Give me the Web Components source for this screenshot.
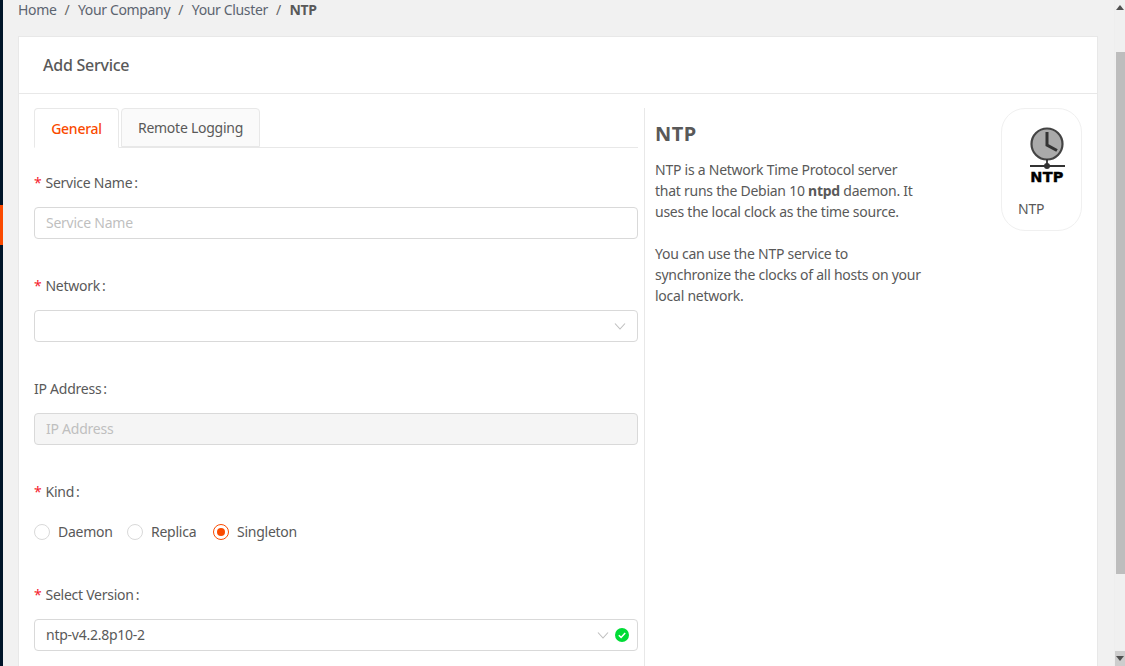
<!DOCTYPE html>
<html lang="en">
<head>
<meta charset="UTF-8">
<title>Add Service</title>
<style>
  html, body { margin: 0; height: 100%; overflow: hidden; }
  body { font: 14px/21px "Noto Sans", sans-serif; letter-spacing: -0.25px; color: #595959; background: #f1f1f1; }
</style>
</head>
<body>
<app-shell>
  <crumb-bar slot="crumbs"></crumb-bar>
  <service-card>
    <form-pane slot="form">
      <tab-strip></tab-strip>
      <form-field label="Service Name" required><text-input placeholder="Service Name"></text-input></form-field>
      <form-field label="Network" required><select-box></select-box></form-field>
      <form-field label="IP Address"><text-input placeholder="IP Address" disabled></text-input></form-field>
      <form-field label="Kind" required><radio-group options="Daemon,Replica,Singleton" selected="Singleton"></radio-group></form-field>
      <form-field label="Select Version" required><select-box value="ntp-v4.2.8p10-2" valid></select-box></form-field>
    </form-pane>
    <service-info slot="info"></service-info>
  </service-card>
</app-shell>

<script>
  // small helper, every element sets its shadow markup the same way
  class Base extends HTMLElement {
    constructor() {
      super();
      this.attachShadow({ mode: 'open' });
    }
    render(html) {
      this.shadowRoot.innerHTML = html;
    }
  }

  class AppShell extends Base {
    connectedCallback() {
      this.render(`
        <style>
          :host { display: flex; height: 666px; overflow: hidden; }
          .rail { width: 3px; flex: none; background: #001529; padding-top: 205px; box-sizing: border-box; }
          .rail i { display: block; height: 40px; background: #fa4a00; }
          main { flex: 1; min-width: 0; padding: 0 16px 0 15px; }
          .bar { width: 10px; flex: none; display: flex; flex-direction: column; background: #f0f0f0; border-left: 1px solid #eeeeee; }
          .arrow { height: 15px; flex: none; display: flex; align-items: center; justify-content: center; }
          .arrow.down { background: #cdcdcd; }
          .up-gap { height: 37px; flex: none; }
          .thumb { height: 522px; flex: none; margin-left: 1px; background: #bdbdbd; }
          .rest { flex: 1; }
        </style>
        <div class="rail"><i></i></div>
        <main><slot name="crumbs"></slot><slot></slot></main>
        <div class="bar">
          <div class="arrow"><svg width="8" height="5" viewBox="0 0 8 5"><path d="M4 0 8 5H0z" fill="#505050"/></svg></div>
          <div class="up-gap"></div>
          <div class="thumb"></div>
          <div class="rest"></div>
          <div class="arrow down"><svg width="8" height="5" viewBox="0 0 8 5"><path d="M0 0H8L4 5z" fill="#505050"/></svg></div>
        </div>
      `);
    }
  }

  class CrumbBar extends Base {
    connectedCallback() {
      this.render(`
        <style>
          :host { display: flex; height: 37px; box-sizing: border-box; margin-top: -1px; font-size: 14px; line-height: 21px; letter-spacing: -0.35px; color: #5c6470; }
          span { white-space: nowrap; }
          .sep { margin: 0 8.7px 0 8px; color: #666; }
          b { color: #595959; font-weight: 700; }
        </style>
        <span>Home</span><span class="sep">/</span>
        <span>Your Company</span><span class="sep">/</span>
        <span>Your Cluster</span><span class="sep">/</span>
        <b>NTP</b>
      `);
    }
  }

  class ServiceCard extends Base {
    connectedCallback() {
      this.render(`
        <style>
          :host { display: block; background: #fff; border: 1px solid #e8e8e8; border-bottom: 0; height: 640px; box-sizing: border-box; }
          header { height: 57px; box-sizing: border-box; border-bottom: 1px solid #e8e8e8; padding: 0 24px; display: flex; align-items: center; font-size: 16px; font-weight: 500; color: #595959; }
          .body { display: flex; padding: 14px 15px 0; }
          .form { width: 604px; flex: none; }
          .info { flex: 1; margin-left: 6px; border-left: 1px solid #e8e8e8; padding-left: 10px; min-height: 560px; }
        </style>
        <header>Add Service</header>
        <div class="body">
          <div class="form"><slot name="form"></slot></div>
          <div class="info"><slot name="info"></slot></div>
        </div>
      `);
    }
  }

  class FormPane extends Base {
    connectedCallback() {
      this.render(`<style>:host { display: block; }</style><slot></slot>`);
    }
  }

  class TabStrip extends Base {
    connectedCallback() {
      this.render(`
        <style>
          :host { display: flex; height: 40px; box-sizing: border-box; border-bottom: 1px solid #e8e8e8; margin-bottom: 23px; }
          .tab { height: 40px; box-sizing: border-box; display: flex; align-items: center; justify-content: center; border: 1px solid #e8e8e8; border-radius: 4px 4px 0 0; background: #fafafa; margin-right: 2px; white-space: nowrap; }
          .on { width: 85px; background: #fff; border-bottom-color: #fff; color: #fa4a00; font-weight: 500; }
          .off { width: 139px; height: 39px; }
        </style>
        <div class="tab on">General</div>
        <div class="tab off">Remote Logging</div>
      `);
    }
  }

  class FormField extends Base {
    connectedCallback() {
      const req = this.hasAttribute('required');
      this.render(`
        <style>
          :host { display: block; height: 103px; }
          label { display: block; height: 24px; line-height: 24px; margin-bottom: 12px; white-space: nowrap; }
          .req { color: #f5222d; margin-right: 4px; }
          .colon { margin-left: 2px; }
        </style>
        <label>${req ? '<span class="req">*</span>' : ''}${this.getAttribute('label')}<span class="colon">:</span></label>
        <slot></slot>
      `);
    }
  }

  class TextInput extends Base {
    connectedCallback() {
      const off = this.hasAttribute('disabled');
      this.render(`
        <style>
          :host { display: block; }
          input { display: block; width: 100%; height: 32px; box-sizing: border-box; padding: 0 11px 2px; font: inherit; letter-spacing: inherit; border: 1px solid #d9d9d9; border-radius: 4px; background: #fff; outline: 0; }
          input::placeholder { color: #bfbfbf; opacity: 1; }
          input:disabled { background: #f5f5f5; }
        </style>
        <input placeholder="${this.getAttribute('placeholder') || ''}" ${off ? 'disabled' : ''}>
      `);
    }
  }

  class SelectBox extends Base {
    connectedCallback() {
      const ok = this.hasAttribute('valid');
      this.render(`
        <style>
          :host { display: flex; align-items: center; height: 32px; box-sizing: border-box; padding: 0 8px 0 11px; border: 1px solid #d9d9d9; border-radius: 4px; background: #fff; }
          .val { flex: 1; white-space: nowrap; padding-bottom: 2px; }
          svg { display: block; flex: none; }
          .tick { margin-left: 6px; }
        </style>
        <span class="val">${this.getAttribute('value') || ''}</span>
        <svg width="12" height="12" viewBox="0 0 12 12" ${ok ? '' : 'style="margin-right:3px"'}><path d="M1 3.5 6 9l5-5.5" fill="none" stroke="#bfbfbf" stroke-width="1.1"/></svg>
        ${ok ? `<svg class="tick" width="14" height="14" viewBox="0 0 14 14"><circle cx="7" cy="7" r="7" fill="#00dc36"/><path d="M3.8 7.2 6.1 9.4 10.2 4.9" fill="none" stroke="#fff" stroke-width="1.5"/></svg>` : ''}
      `);
    }
  }

  class RadioGroup extends Base {
    connectedCallback() {
      const picked = this.getAttribute('selected');
      const items = this.getAttribute('options').split(',').map(o => `
        <span class="opt${o === picked ? ' on' : ''}"><i></i><span class="txt">${o}</span></span>`).join('');
      this.render(`
        <style>
          :host { display: grid; grid-template-columns: 93px 86px auto; height: 32px; align-items: center; }
          .opt { display: flex; align-items: center; white-space: nowrap; }
          .txt { padding-bottom: 2px; }
          i { width: 16px; height: 16px; box-sizing: border-box; border: 1px solid #d9d9d9; border-radius: 50%; margin-right: 8px; background: #fff; position: relative; }
          .on i { border-color: #fa4a00; }
          .on i::after { content: ""; position: absolute; left: 3px; top: 3px; width: 8px; height: 8px; border-radius: 50%; background: #fa4a00; }
        </style>
        ${items}
      `);
    }
  }

  class ServiceInfo extends Base {
    connectedCallback() {
      this.render(`
        <style>
          :host { display: flex; justify-content: space-between; color: #595959; }
          .text { padding-top: 12px; }
          h2 { margin: 0 0 11px; font-size: 20px; line-height: 28px; font-weight: 700; letter-spacing: 0.5px; color: #595959; }
          p { margin: 0 0 21px; }
          p span { display: block; white-space: nowrap; }
          .badge { width: 81px; height: 123px; box-sizing: border-box; border: 1px solid #f0f0f0; border-radius: 24px; padding: 0 0 0 16px; flex: none; }
          svg { display: block; margin: 0 0 0 -16px; }
          .name { margin-top: 9px; }
        </style>
        <div class="text">
          <h2>NTP</h2>
          <p>
            <span>NTP is a Network Time Protocol server</span>
            <span>that runs the Debian 10 <b>ntpd</b> daemon. It</span>
            <span>uses the local clock as the time source.</span>
          </p>
          <p>
            <span>You can use the NTP service to</span>
            <span>synchronize the clocks of all hosts on your</span>
            <span>local network.</span>
          </p>
        </div>
        <div class="badge">
          <svg width="79" height="80" viewBox="0 0 79 80">
            <circle cx="45" cy="35" r="15.5" fill="#aaa" stroke="#444" stroke-width="2.2"/>
            <path d="M45 23V36L55 41.5" fill="none" stroke="#333" stroke-width="3"/>
            <path d="M45 50V57M28 57H63" stroke="#333" stroke-width="1.8"/>
            <circle cx="45" cy="57" r="3" fill="#333"/>
            <text x="45" y="72.5" text-anchor="middle" font-family="DejaVu Sans" font-weight="700" font-size="14.5" letter-spacing="0.2" fill="#000" stroke="#000" stroke-width="0.4">NTP</text>
          </svg>
          <div class="name">NTP</div>
        </div>
      `);
    }
  }

  customElements.define('app-shell', AppShell);
  customElements.define('crumb-bar', CrumbBar);
  customElements.define('service-card', ServiceCard);
  customElements.define('form-pane', FormPane);
  customElements.define('tab-strip', TabStrip);
  customElements.define('form-field', FormField);
  customElements.define('text-input', TextInput);
  customElements.define('select-box', SelectBox);
  customElements.define('radio-group', RadioGroup);
  customElements.define('service-info', ServiceInfo);
</script>
</body>
</html>
